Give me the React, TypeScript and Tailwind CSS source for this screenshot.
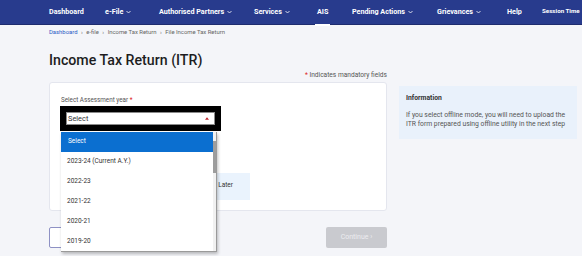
import React from "react";

const Caret: React.FC = () => (
  <svg className="inline-block w-[5px] h-[4px] ml-[3px] align-middle" viewBox="0 0 10 6" fill="none" stroke="currentColor" strokeWidth={1.6}>
    <path d="M1 1l4 4 4-4" />
  </svg>
);

const navItems: { label: string; w: string; caret?: boolean; active?: boolean }[] = [
  { label: "Dashboard", w: "w-[56px]" },
  { label: "e-File", w: "w-[54px]", caret: true },
  { label: "Authorised Partners", w: "w-[95px]", caret: true },
  { label: "Services", w: "w-[63px]", caret: true },
  { label: "AIS", w: "w-[35px]", active: true },
  { label: "Pending Actions", w: "w-[85px]", caret: true },
  { label: "Grievances", w: "w-[70px]", caret: true },
  { label: "Help", w: "w-[35px]" },
];

const years = ["2023-24 (Current A.Y.)", "2022-23", "2021-22", "2020-21", "2019-20"];

const App: React.FC = () => {
  return (
    <div className="relative w-[582px] h-[256px] overflow-hidden bg-[#f4f5f9] font-['Roboto',sans-serif]">
      {/* Top nav */}
      <div className="flex items-center h-[25px] pl-[49px] bg-[#283b8d] border-b border-[#1e2c6e] text-white text-[7.2px] font-bold">
        {navItems.map((item) => (
          <div key={item.label} className={`${item.w} shrink-0 h-full flex items-center`}>
            <span className="relative h-full flex items-center">
              {item.label}
              {item.caret && <Caret />}
              {item.active && <span className="absolute left-[-2px] right-[-2px] bottom-[-2px] h-[2px] bg-white" />}
            </span>
          </div>
        ))}
        <div className="text-[6.2px] whitespace-nowrap">Session Time</div>
      </div>

      {/* Breadcrumb */}
      <div className="pl-[49px] pt-[3px] text-[5.9px] text-[#666] flex gap-[3.5px]">
        <span className="text-[#2a5bc6]">Dashboard</span>
        <span>›</span>
        <span>e-file</span>
        <span>›</span>
        <span>Income Tax Return</span>
        <span>›</span>
        <span>File Income Tax Return</span>
      </div>

      <div className="flex pl-[49px] gap-[12px]">
        {/* Left column */}
        <div className="w-[338px] shrink-0">
          <h1 className="mt-[13px] text-[14.2px] leading-[20px] font-medium text-[#1d1d1f]">
            Income Tax Return (ITR)
          </h1>
          <div className="mt-[1px] text-right text-[6.6px] leading-[8px] text-[#555]">
            <span className="text-[#d22]">*</span> Indicates mandatory fields
          </div>

          {/* Card */}
          <div className="mt-[3px] h-[129px] bg-white border border-[#e4e6ee] rounded-[3px] pl-[11px] pt-[13px]">
            <div className="text-[6.3px] leading-[8px] text-[#555]">
              Select Assessment year <span className="text-[#d22]">*</span>
            </div>
            <div className="relative mt-[2px]">
              <div className="w-[161px] h-[25px] bg-black p-[6px] -ml-[1px]">
                <div className="h-full bg-white border border-[#8a8a8a] flex items-center justify-between pl-[1px] pr-[5px]">
                  <span className="text-[7.4px] text-[#333]">Select</span>
                  <svg className="w-[4px] h-[3px]" viewBox="0 0 8 5">
                    <path d="M0 5L4 0L8 5Z" fill="#c0262d" />
                  </svg>
                </div>
              </div>
            </div>
            <div className="mt-[42px] ml-[60px] w-[129px] h-[27px] bg-[#eaf3fd] flex items-center justify-end pr-[17px] text-[6.5px] text-[#333]">
              File Later
            </div>
          </div>

          {/* Buttons */}
          <div className="mt-[16px] flex justify-between">
            <div className="w-[60px] h-[21px] border border-[#8e91c4] rounded-[2px] bg-white" />
            <div className="w-[61px] h-[21px] rounded-[2px] bg-[#c9cacf] flex items-center justify-center text-[7px] text-[#ececf0]">
              Continue ›
            </div>
          </div>
        </div>

        {/* Right column: information */}
        <div className="w-[178px] shrink-0 mt-[49px]">
          <div className="h-[53px] bg-[#e9f1fb] pl-[7px] pr-[8px] pt-[8px]">
            <div className="text-[6.8px] font-bold text-[#333] leading-[8px]">Information</div>
            <div className="mt-[9px] text-[6.8px] leading-[9.5px] text-[#555]">
              If you select offline mode, you will need to upload the ITR form prepared using offline utility in the next step
            </div>
          </div>
        </div>
      </div>

      {/* Open dropdown list (overlay) */}
      <div className="absolute left-[61px] top-[132px] w-[156px] h-[120px] bg-white border-r border-b border-[#9a9a9a] shadow-[1px_2px_3px_rgba(0,0,0,0.25)] flex">
        <div className="flex-1">
          <div className="h-[20px] bg-[#0b6fd0] text-white text-[6.5px] flex items-center pl-[7px]">Select</div>
          {years.map((y) => (
            <div key={y} className="h-[20px] text-[6.5px] text-[#333] flex items-center pl-[6px]">
              {y}
            </div>
          ))}
        </div>
        <div className="w-[3px] bg-[#f1f1f1] pt-[9px]">
          <div className="h-[32px] bg-[#9d9d9d]" />
        </div>
      </div>
    </div>
  );
};

export default App;
